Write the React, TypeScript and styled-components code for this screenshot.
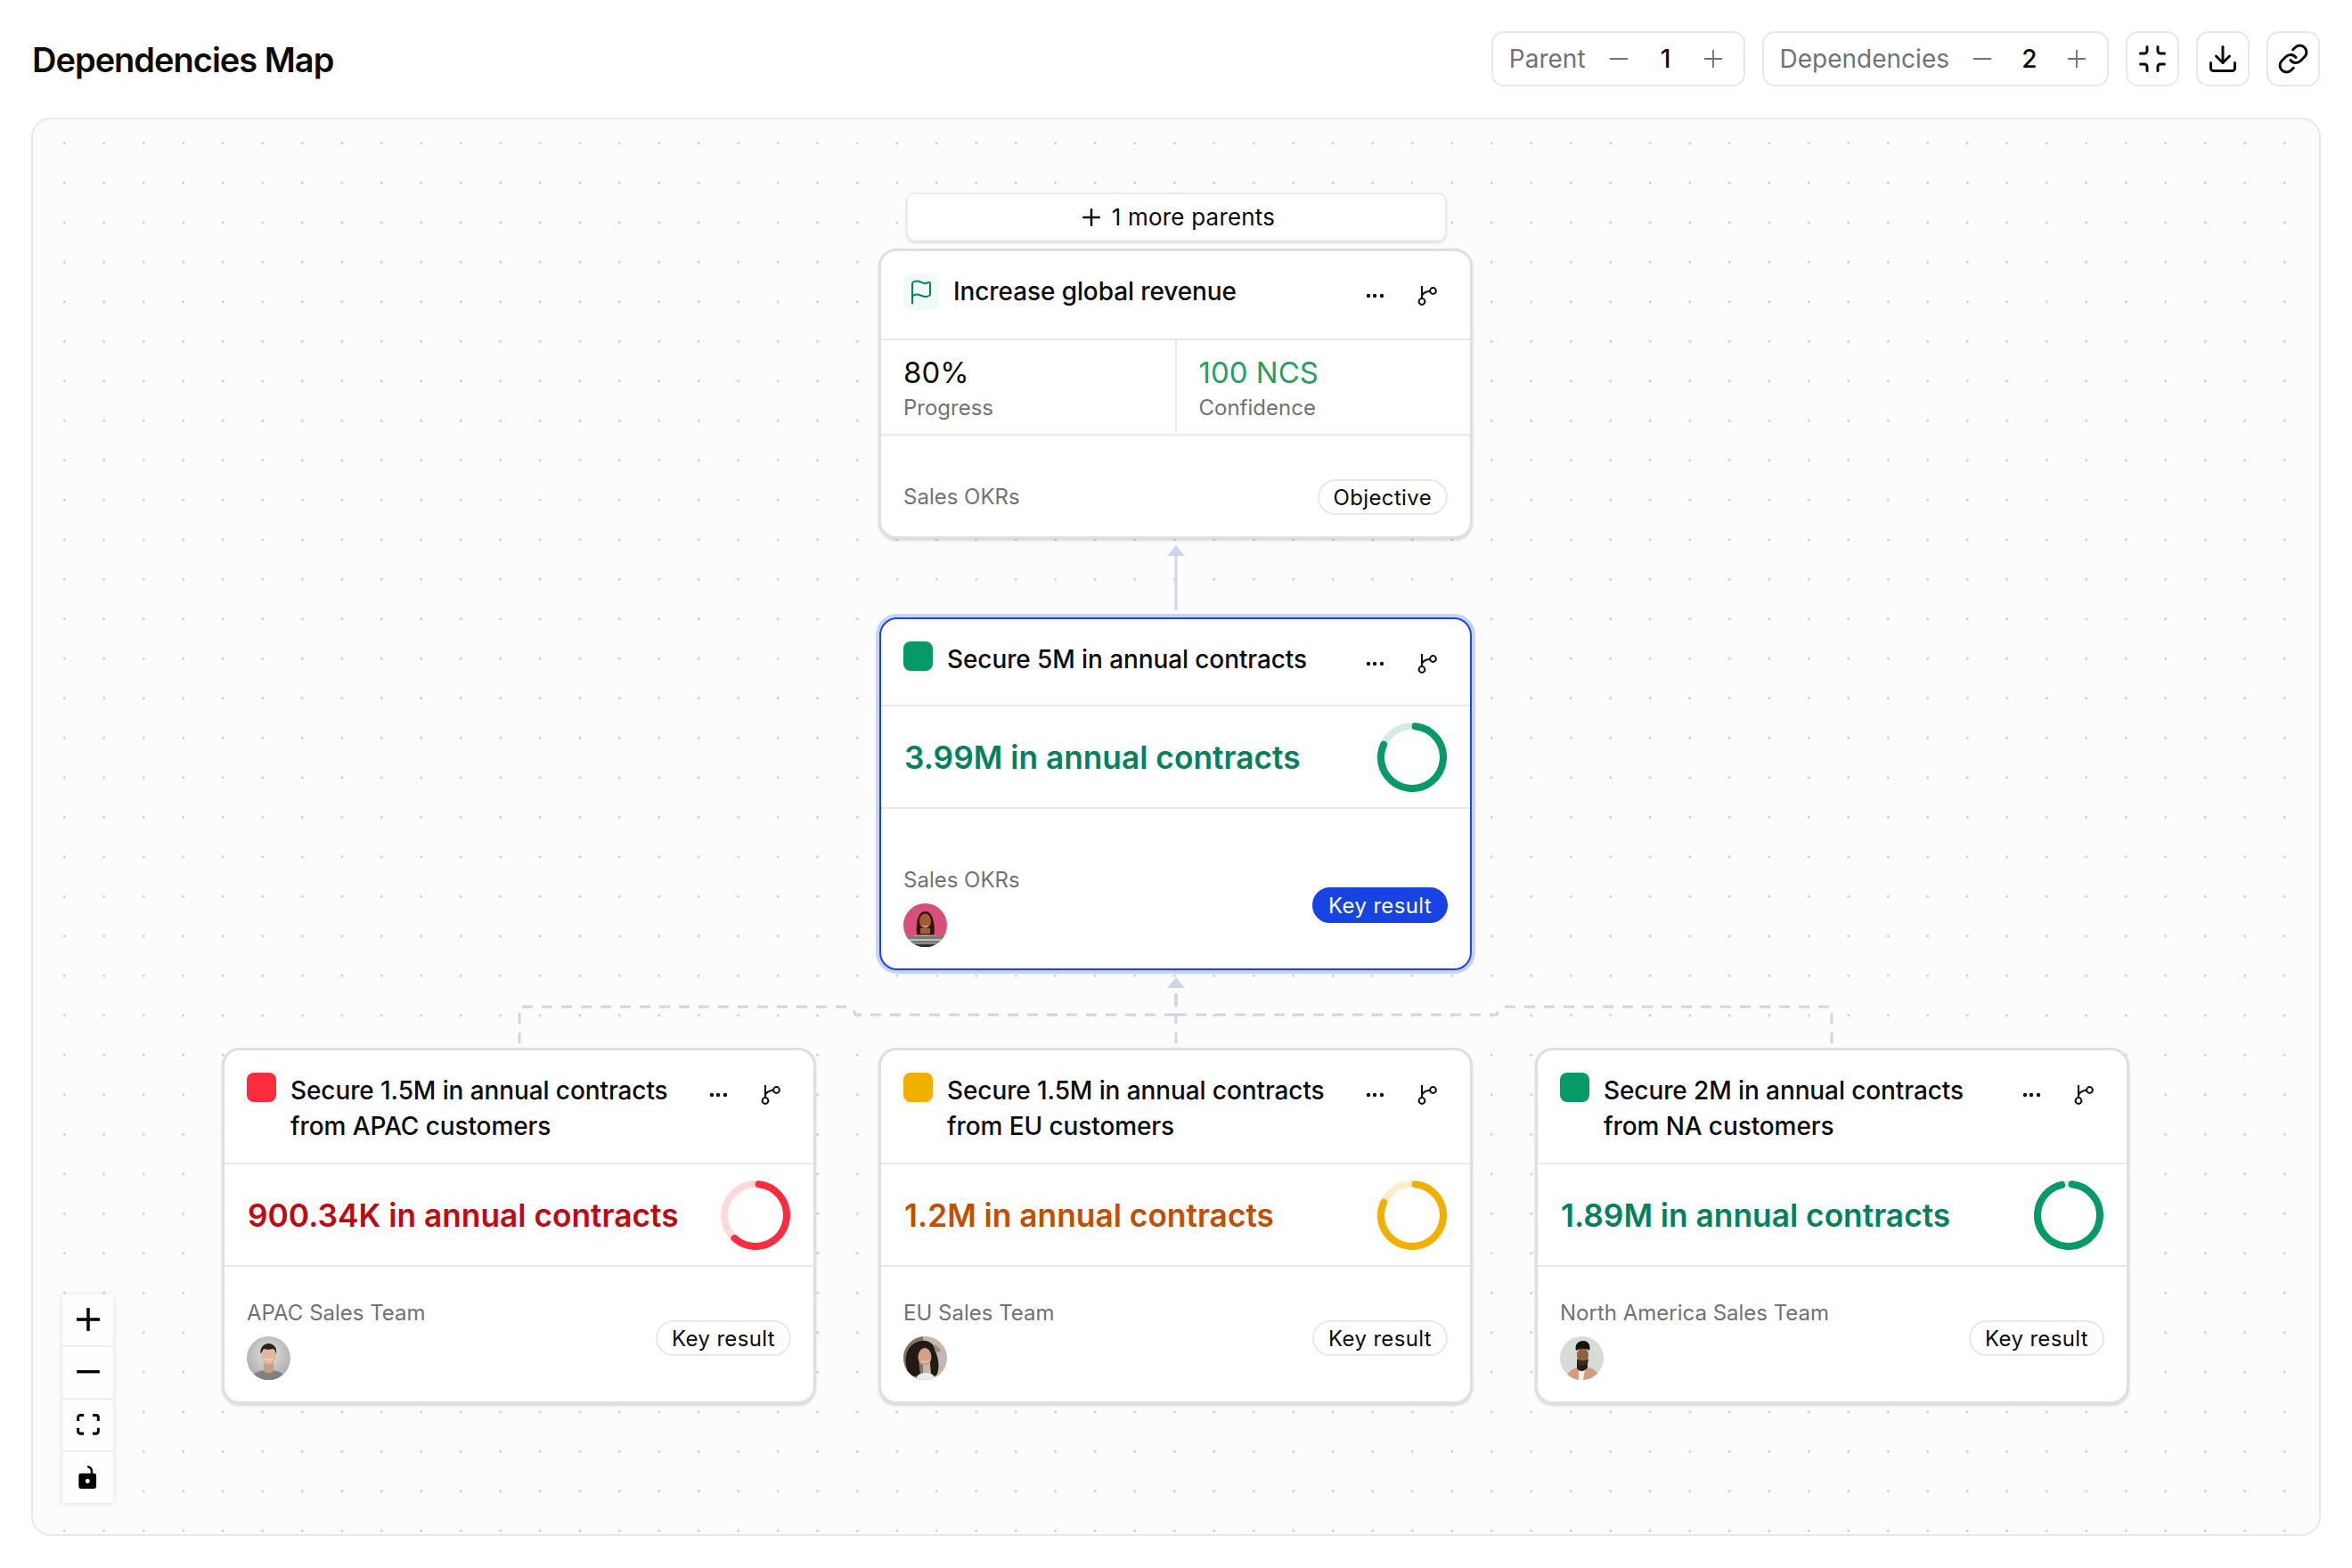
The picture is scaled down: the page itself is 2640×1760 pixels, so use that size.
import React from "react";
import styled, { createGlobalStyle } from "styled-components";
import { Download, Flag, Link, Minimize, Minus, Plus } from "lucide-react";

type Tone = "green" | "red" | "amber";

const tones: Record<Tone, { solid: string; track: string; text: string }> = {
    green: { solid: "#079a66", track: "#d5ebe3", text: "#05805c" },
    red: { solid: "#fb2c3e", track: "#fdd9dc", text: "#bf0a13" },
    amber: { solid: "#f1b000", track: "#fdeecb", text: "#c24e00" },
};

const GlobalStyle = createGlobalStyle`
    html, body {
        margin: 0;
        padding: 0;
        background: #fff;
    }
    body {
        font-family: Inter, "Noto Sans", sans-serif;
        color: #0c0c0c;
        -webkit-font-smoothing: antialiased;
    }
    * {
        box-sizing: border-box;
    }
`;

const Page = styled.div`
    width: 2640px;
    height: 1760px;
    padding: 0 35px 36px 35px;
    display: flex;
    flex-direction: column;
`;

const Header = styled.header`
    height: 132px;
    flex: none;
    display: flex;
    align-items: center;
    justify-content: space-between;
`;

const Title = styled.h1`
    margin: 2px 0 0 1px;
    font-size: 38px;
    font-weight: 600;
    letter-spacing: -1px;
`;

const Toolbar = styled.div`
    display: flex;
    gap: 19px;
    margin-right: 1px;
`;

const Stepper = styled.div`
    height: 62px;
    display: flex;
    align-items: center;
    gap: 21px;
    padding: 0 18px;
    border: 2px solid #e8e8e8;
    border-radius: 14px;
`;

const StepLabel = styled.span`
    font-size: 28px;
    color: #727272;
`;

const StepButton = styled.span`
    width: 32px;
    display: flex;
    justify-content: center;
    color: #727272;
`;

const StepValue = styled.span`
    width: 32px;
    text-align: center;
    font-size: 28px;
    font-weight: 500;
`;

const IconButton = styled.button`
    width: 60px;
    height: 62px;
    padding: 0;
    display: flex;
    align-items: center;
    justify-content: center;
    background: #fff;
    color: #0c0c0c;
    border: 2px solid #e8e8e8;
    border-radius: 14px;
`;

const Canvas = styled.main`
    position: relative;
    flex: 1;
    background-color: #fcfcfc;
    background-image: radial-gradient(circle, #cbcbcb 1.2px, transparent 1.5px);
    background-size: 44.5px 44.5px;
    background-position: 13px 4.5px;
    border: 2px solid #e8e8e8;
    border-radius: 22px;
`;

const Edges = styled.svg`
    position: absolute;
    left: 0;
    top: 0;
    width: 2566px;
    height: 1588px;
    pointer-events: none;
`;

const Node = styled.div<{ $x: number; $y: number; $h: number }>`
    position: absolute;
    left: ${(p) => p.$x}px;
    top: ${(p) => p.$y}px;
    height: ${(p) => p.$h}px;
    width: 667px;
`;

const MoreParents = styled.div`
    position: absolute;
    left: 980px;
    top: 82px;
    width: 607px;
    height: 55px;
    display: flex;
    align-items: center;
    justify-content: center;
    gap: 8px;
    font-size: 26px;
    letter-spacing: 0.2px;
    background: #fff;
    border: 2px solid #ebebeb;
    border-radius: 10px;
    box-shadow: 0 2px 3px rgba(0, 0, 0, 0.12);
`;

const Card = styled.article<{ $selected?: boolean }>`
    height: 100%;
    margin: ${(p) => (p.$selected ? "0 1px" : "0")};
    display: flex;
    flex-direction: column;
    background: #fff;
    border-radius: 20px;
    border: ${(p) => (p.$selected ? "2px solid #1b46e4" : "3px solid #dfdfdf")};
    box-shadow: ${(p) =>
        p.$selected ? "0 0 0 4px #c8d2f8" : "0 2px 3px rgba(0, 0, 0, 0.14)"};
`;

const CardHead = styled.div<{ $h: number }>`
    height: ${(p) => p.$h}px;
    flex: none;
    display: flex;
    align-items: flex-start;
    gap: 16px;
    padding: 25px 37px 0 25px;
    border-bottom: 2px solid #e9e9e9;
`;

const Square = styled.span<{ $tone: Tone }>`
    flex: none;
    width: 33px;
    height: 33px;
    border-radius: 8px;
    background: ${(p) => tones[p.$tone].solid};
`;

const FlagBadge = styled.span`
    flex: none;
    width: 40px;
    height: 41px;
    display: flex;
    align-items: center;
    justify-content: center;
    border-radius: 9px;
    background: #effbf7;
    color: #0b7c66;
`;

const CardTitle = styled.div`
    flex: 1;
    max-width: 432px;
    font-size: 28px;
    font-weight: 450;
    line-height: 40px;
    letter-spacing: -0.1px;
`;

const Actions = styled.div`
    margin-left: auto;
    padding-top: 13px;
    display: flex;
    gap: 34px;
`;

const Stats = styled.div`
    height: 107px;
    flex: none;
    display: grid;
    grid-template-columns: calc(50% - 1px) 1fr;
    border-bottom: 2px solid #e9e9e9;
`;

const Stat = styled.div`
    padding: 14px 0 0 25px;
    & + & {
        border-left: 2px solid #e9e9e9;
    }
`;

const StatValue = styled.div<{ $tone?: Tone }>`
    font-size: 33px;
    line-height: 45px;
    color: ${(p) => (p.$tone ? "#2a9d63" : "#0c0c0c")};
`;

const Muted = styled.div`
    font-size: 24px;
    line-height: 34px;
    color: #727272;
`;

const FootLabel = styled(Muted)`
    margin-bottom: 3px;
`;

const Metric = styled.div`
    height: 115px;
    flex: none;
    display: flex;
    align-items: center;
    justify-content: space-between;
    padding: 0 26px 0 26px;
    border-bottom: 2px solid #e9e9e9;
`;

const MetricText = styled.div<{ $tone: Tone }>`
    margin-top: 2px;
    font-size: 35.3px;
    font-weight: 600;
    color: ${(p) => tones[p.$tone].text};
`;

const CardFoot = styled.div`
    flex: 1;
    display: flex;
    align-items: flex-end;
    justify-content: space-between;
    padding: 0 25px 24px 25px;
`;

const Owner = styled.div`
    display: flex;
    flex-direction: column;
    gap: 9px;
`;

const Pill = styled.span<{ $primary?: boolean }>`
    height: 40px;
    margin-bottom: 27px;
    padding: 0 16px;
    display: flex;
    align-items: center;
    font-size: 24px;
    letter-spacing: 0.35px;
    border-radius: 20px;
    color: ${(p) => (p.$primary ? "#fff" : "#0c0c0c")};
    background: ${(p) => (p.$primary ? "#1743e2" : "#fff")};
    border: 2px solid ${(p) => (p.$primary ? "#1743e2" : "#e8e8e8")};
`;

const PlainPill = styled(Pill)`
    margin-bottom: 0;
`;

const ZoomControls = styled.div`
    position: absolute;
    left: 33px;
    top: 1319px;
    width: 57px;
    display: flex;
    flex-direction: column;
    box-shadow: 0 1px 6px rgba(0, 0, 0, 0.12);
`;

const ZoomButton = styled.button`
    width: 57px;
    height: 59px;
    padding: 0 0 2px;
    display: flex;
    align-items: center;
    justify-content: center;
    background: #fefefe;
    border: 0;
    border-bottom: 2px solid #eeeeee;
    &:last-child {
        border-bottom: 0;
        height: 57px;
    }
`;

const Dots = () => (
    <svg width="24" height="24" viewBox="0 0 24 24">
        <circle cx="5" cy="12" r="2.2" fill="#111" />
        <circle cx="12" cy="12" r="2.2" fill="#111" />
        <circle cx="20" cy="12" r="2.2" fill="#111" />
    </svg>
);

const BranchIcon = () => (
    <svg width="24" height="24" viewBox="0 0 24 24" fill="none" stroke="#111" strokeWidth="2">
        <path d="M7 1v14" />
        <circle cx="7" cy="18.5" r="3.4" />
        <circle cx="19.5" cy="6.5" r="3.4" />
        <path d="M7 13c0-4 4-5.500 9-6.500" />
    </svg>
);

const Ring = ({ tone, value }: { tone: Tone; value: number }) => {
    const r = 35;
    const length = 2 * Math.PI * r;
    return (
        <svg width="78" height="78" viewBox="0 0 78 78" fill="none">
            <circle cx="39" cy="39" r={r} stroke={tones[tone].track} strokeWidth="8" />
            <circle
                cx="39"
                cy="39"
                r={r}
                stroke={tones[tone].solid}
                strokeWidth="8"
                strokeLinecap="round"
                strokeDasharray={`${length * value} ${length}`}
                transform="rotate(-84 39 39)"
            />
        </svg>
    );
};

const AvatarSvg = styled.svg`
    display: block;
    border-radius: 50%;
    filter: blur(0.35px);
`;

const Avatar = ({ kind }: { kind: "pink" | "grey" | "curly" | "mint" }) => {
    if (kind === "pink") {
        return (
            <AvatarSvg width="49" height="49" viewBox="0 0 49 49">
                <rect width="49" height="49" fill="#d8507a" />
                <path d="M15 35c-1-13 1-26 9.500-26s11 13 10 26l-3 1-13 0z" fill="#2a1512" />
                <ellipse cx="24.500" cy="20" rx="6.500" ry="8.500" fill="#a85a33" />
                <path d="M21 24c2 2 5 2 7 0-1 3-6 3-7 0z" fill="#fff" />
                <path d="M19 28h11v6h-11z" fill="#a85a33" />
                <path d="M7 38c4-4 31-4 35 0z" fill="#c98a70" />
                <rect y="37" width="49" height="12" fill="#77797b" />
                <rect y="40" width="49" height="2" fill="#bdbdbd" />
                <rect y="44" width="49" height="1.500" fill="#8f9193" />
                <rect y="46" width="49" height="3" fill="#2f2f2f" />
            </AvatarSvg>
        );
    }
    if (kind === "grey") {
        return (
            <AvatarSvg width="49" height="49" viewBox="0 0 49 49">
                <defs>
                    <radialGradient id="avatar-grey" cx="50%" cy="40%" r="70%">
                        <stop offset="0%" stopColor="#e4e4e4" />
                        <stop offset="100%" stopColor="#a2a2a2" />
                    </radialGradient>
                </defs>
                <rect width="49" height="49" fill="url(#avatar-grey)" />
                <path d="M5 49c1-9 10-11 19-11s19 2 20 11z" fill="#7f8080" />
                <path d="M19 29h11v10c-3 3-8 3-11 0z" fill="#c79f86" />
                <ellipse cx="24.500" cy="21" rx="8.500" ry="10.500" fill="#e0b8a0" />
                <path d="M15.500 20c-1-8 4-12 9-12s10 4 8.500 12c-1-4-2-6-4-6-3 1-7 1-10 0-1 2-2 3-3.500 6z" fill="#2b2320" />
                <path d="M19.500 24c3 3 7 3 10 0-1 4-9 4-10 0z" fill="#fff" />
            </AvatarSvg>
        );
    }
    if (kind === "curly") {
        return (
            <AvatarSvg width="49" height="49" viewBox="0 0 49 49">
                <rect width="49" height="49" fill="#c2b8ae" />
                <path d="M0 0h22v49H0z" fill="#7d756c" />
                <path d="M5 40c-5-13-3-32 15-35 9-1 15 4 16 12 3 7 5 16 2 25-2 4-6 4-7 0l-2-22c-4 2-8 2-11 2-1 7 0 15 1 20-3 4-11 4-14-2z" fill="#231a16" />
                <path d="M14 49c1-6 5-8 11-8s10 2 11 8z" fill="#ecebe8" />
                <ellipse cx="24" cy="23" rx="7.500" ry="10" fill="#d0a283" />
                <path d="M20 26.500c2.500 2.500 6 2.500 8.500 0-1 3.500-7.500 3.500-8.500 0z" fill="#fff" />
                <path d="M34 9c4 1 7 4 8 8l-6 1z" fill="#a08d7d" />
            </AvatarSvg>
        );
    }
    return (
        <AvatarSvg width="49" height="49" viewBox="0 0 49 49">
            <rect width="49" height="49" fill="#d6ddd6" />
            <path d="M6 49c1-8 7-13 14-14l12 0c7 1 12 6 13 14z" fill="#cf9f7f" />
            <path d="M21 38h7l-2 11h-5z" fill="#f3eee8" />
            <path d="M19 26h12v9c-4 5-9 5-12 1z" fill="#2a1c17" />
            <ellipse cx="25.500" cy="21" rx="6.500" ry="8.500" fill="#96603f" />
            <path d="M19 25c3 3 10 3 13 0l-1 6c-3 2-8 2-11 0z" fill="#3a2a22" />
            <path d="M18 16c-2-7 3-11 8-11s9 4 7 11c-3-3-11-3-15 0z" fill="#17110f" />
        </AvatarSvg>
    );
};

const lowerCards = [
    {
        x: 212,
        tone: "red" as Tone,
        title: "Secure 1.5M in annual contracts from APAC customers",
        metric: "900.34K in annual contracts",
        value: 0.6,
        team: "APAC Sales Team",
        avatar: "grey" as const,
    },
    {
        x: 949,
        tone: "amber" as Tone,
        title: "Secure 1.5M in annual contracts from EU customers",
        metric: "1.2M in annual contracts",
        value: 0.8,
        team: "EU Sales Team",
        avatar: "curly" as const,
    },
    {
        x: 1686,
        tone: "green" as Tone,
        title: "Secure 2M in annual contracts from NA customers",
        metric: "1.89M in annual contracts",
        value: 0.945,
        team: "North America Sales Team",
        avatar: "mint" as const,
    },
];

const edgeColor = "#cbd6e6";

const CardActions = () => (
    <Actions>
        <Dots />
        <BranchIcon />
    </Actions>
);

export default function App() {
    return (
        <Page>
            <GlobalStyle />
            <Header>
                <Title>Dependencies Map</Title>
                <Toolbar>
                    <Stepper>
                        <StepLabel>Parent</StepLabel>
                        <StepButton><Minus size={32} strokeWidth={1.4} /></StepButton>
                        <StepValue>1</StepValue>
                        <StepButton><Plus size={32} strokeWidth={1.4} /></StepButton>
                    </Stepper>
                    <Stepper>
                        <StepLabel>Dependencies</StepLabel>
                        <StepButton><Minus size={32} strokeWidth={1.4} /></StepButton>
                        <StepValue>2</StepValue>
                        <StepButton><Plus size={32} strokeWidth={1.4} /></StepButton>
                    </Stepper>
                    <IconButton><Minimize size={36} strokeWidth={2} /></IconButton>
                    <IconButton><Download size={36} strokeWidth={2} /></IconButton>
                    <IconButton><Link size={36} strokeWidth={2} /></IconButton>
                </Toolbar>
            </Header>

            <Canvas>
                <Edges viewBox="37 134 2566 1588" fill="none">
                    <path d="M1320 685V620" stroke={edgeColor} strokeWidth="3" />
                    <path d="M1320 612l-10 12h20z" fill={edgeColor} />
                    <path d="M1320 1097l-10 12h20z" fill={edgeColor} />
                    <g stroke={edgeColor} strokeWidth="3" strokeDasharray="12 10">
                        <path d="M583 1171V1130H952Q958 1130 960 1139H1320V1109" />
                        <path d="M2056 1171V1130H1688Q1682 1130 1680 1139H1320V1109" />
                        <path d="M1320 1171V1109" />
                    </g>
                </Edges>

                <MoreParents>
                    <Plus size={30} strokeWidth={2} />
                    1 more parents
                </MoreParents>

                <Node $x={949} $y={145} $h={326}>
                    <Card>
                        <CardHead $h={100}>
                            <FlagBadge><Flag size={30} strokeWidth={1.6} /></FlagBadge>
                            <CardTitle>Increase global revenue</CardTitle>
                            <CardActions />
                        </CardHead>
                        <Stats>
                            <Stat>
                                <StatValue>80%</StatValue>
                                <Muted>Progress</Muted>
                            </Stat>
                            <Stat>
                                <StatValue $tone="green">100 NCS</StatValue>
                                <Muted>Confidence</Muted>
                            </Stat>
                        </Stats>
                        <CardFoot>
                            <FootLabel>Sales OKRs</FootLabel>
                            <PlainPill>Objective</PlainPill>
                        </CardFoot>
                    </Card>
                </Node>

                <Node $x={949} $y={559} $h={396}>
                    <Card $selected>
                        <CardHead $h={98}>
                            <Square $tone="green" />
                            <CardTitle>Secure 5M in annual contracts</CardTitle>
                            <CardActions />
                        </CardHead>
                        <Metric>
                            <MetricText $tone="green">3.99M in annual contracts</MetricText>
                            <Ring tone="green" value={0.8} />
                        </Metric>
                        <CardFoot>
                            <Owner>
                                <Muted>Sales OKRs</Muted>
                                <Avatar kind="pink" />
                            </Owner>
                            <Pill $primary>Key result</Pill>
                        </CardFoot>
                    </Card>
                </Node>

                {lowerCards.map((card) => (
                    <Node key={card.x} $x={card.x} $y={1042} $h={400}>
                        <Card>
                            <CardHead $h={128}>
                                <Square $tone={card.tone} />
                                <CardTitle>{card.title}</CardTitle>
                                <CardActions />
                            </CardHead>
                            <Metric>
                                <MetricText $tone={card.tone}>{card.metric}</MetricText>
                                <Ring tone={card.tone} value={card.value} />
                            </Metric>
                            <CardFoot>
                                <Owner>
                                    <Muted>{card.team}</Muted>
                                    <Avatar kind={card.avatar} />
                                </Owner>
                                <Pill>Key result</Pill>
                            </CardFoot>
                        </Card>
                    </Node>
                ))}

                <ZoomControls>
                    <ZoomButton>
                        <svg width="26" height="26" viewBox="0 0 32 32">
                            <path d="M32 18.133H18.133V32h-4.266V18.133H0v-4.266h13.867V0h4.266v13.867H32z" />
                        </svg>
                    </ZoomButton>
                    <ZoomButton>
                        <svg width="26" height="4" viewBox="0 0 32 5">
                            <path d="M0 0h32v4.200H0z" />
                        </svg>
                    </ZoomButton>
                    <ZoomButton>
                        <svg width="26" height="24" viewBox="0 0 32 30">
                            <path d="M3.692 4.630c0-.530.400-.938.939-.938h5.215V0H4.708C2.130 0 0 2.054 0 4.630v5.216h3.692V4.631zM27.354 0h-5.200v3.692h5.170c.530 0 .984.400.984.939v5.215H32V4.631A4.624 4.624 0 0027.354 0zm.954 24.830c0 .532-.400.940-.939.940h-5.215v3.768h5.215c2.577 0 4.631-2.130 4.631-4.707v-5.139h-3.692v5.139zm-23.677.940c-.531 0-.939-.400-.939-.940v-5.138H0v5.139c0 2.577 2.130 4.707 4.708 4.707h5.138V25.770H4.631z" />
                        </svg>
                    </ZoomButton>
                    <ZoomButton>
                        <svg width="21" height="26" viewBox="0 0 25 32">
                            <path
                                fillRule="evenodd"
                                d="M3 10.667h18.300a3 3 0 013 3v15.300a3 3 0 01-3 3H3a3 3 0 01-3-3v-15.300a3 3 0 013-3zM12.190 18.400a3.050 3.050 0 100 6.100 3.050 3.050 0 000-6.100z"
                            />
                            <path d="M18 11V7.600C18 4.500 15.500 2 12.200 1.600" fill="none" stroke="#000" strokeWidth="3" />
                        </svg>
                    </ZoomButton>
                </ZoomControls>
            </Canvas>
        </Page>
    );
}
